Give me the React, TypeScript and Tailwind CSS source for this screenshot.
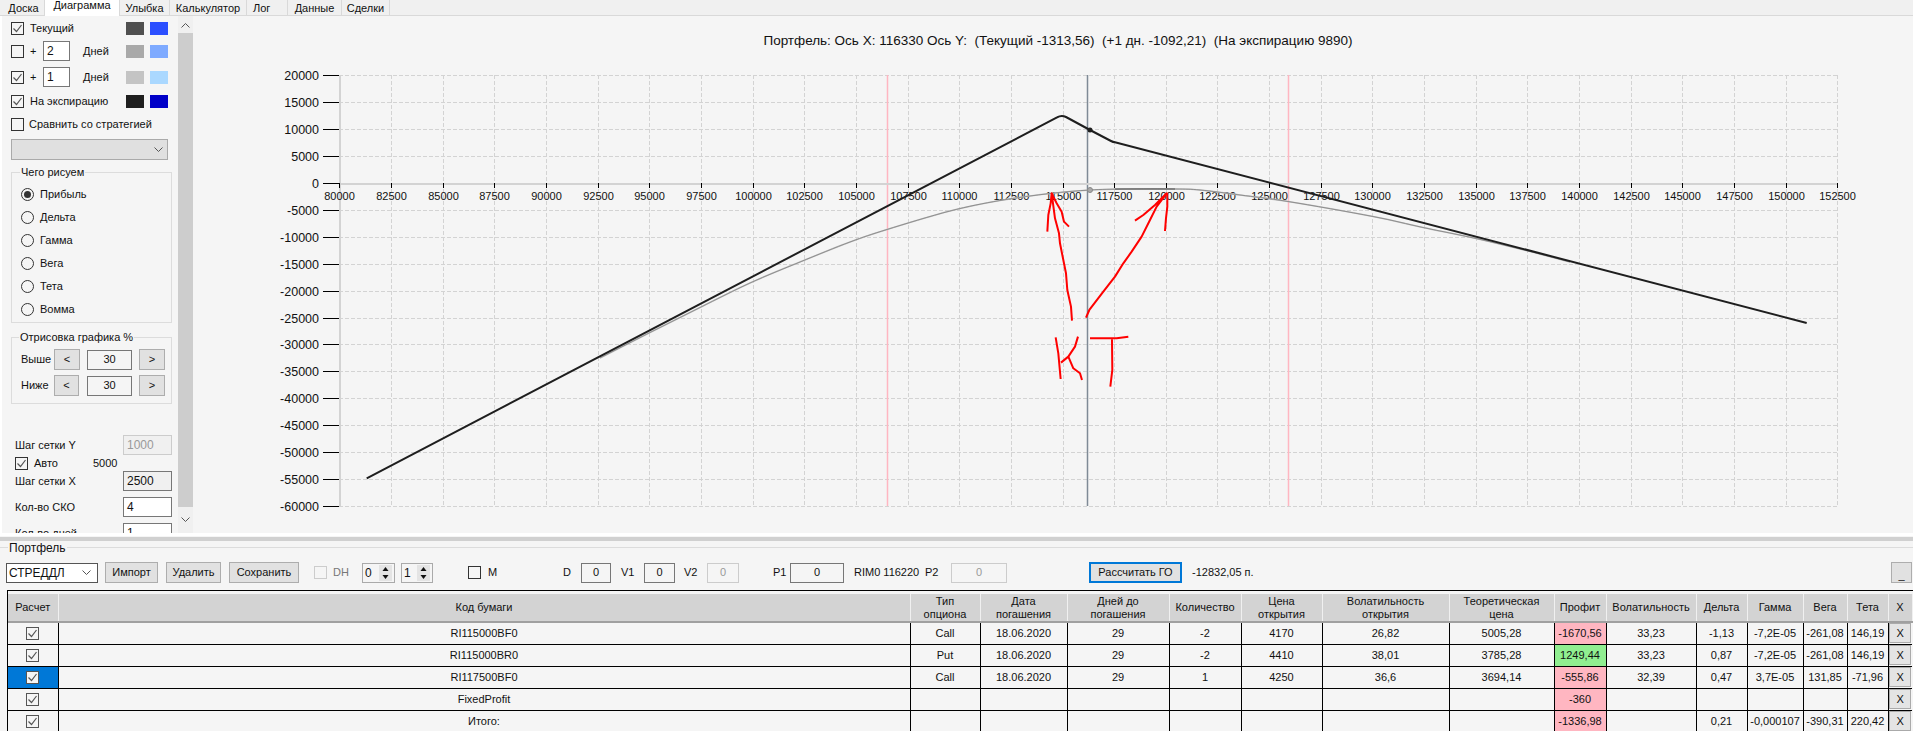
import type { ReactNode } from "react";

// Option portfolio window: chart tab on top, portfolio grid below.

const tabs = [
  { label: "Доска", cls: "w-[45px] justify-center pl-[3px]" },
  { label: "Диаграмма", cls: "w-[75px] justify-center bg-white pb-[5px]" },
  { label: "Улыбка", cls: "w-[50px] justify-center" },
  { label: "Калькулятор", cls: "w-[77px] justify-center" },
  { label: "Лог", cls: "w-[41px] pl-[6px]" },
  { label: "Данные", cls: "w-[54px] justify-center" },
  { label: "Сделки", cls: "w-[48px] justify-center" },
];

const X0 = 339.4;
const Y0 = 183;
const xOf = (i: number) => Math.round(X0 + i * 51.65) + 0.5;
const yOf = (v: number) => Math.round(Y0 - v * 0.00538) + 0.5;

const xTicks = Array.from({ length: 30 }, (_, i) => i);
const yTicks = Array.from({ length: 17 }, (_, i) => 20000 - i * 5000);

const expiryLine =
  "M366.7 478.3L1057 117.4Q1061.5 114.6 1066 117L1090 130L1111 141Q1113 142 1115 142.3L1806.7 323";

const currentPoints: [number, number][] = [
  [600, 358], [650, 332.5], [700, 307.5], [750, 283], [800, 262], [850, 242], [887, 229.5], [950, 211],
  [1000, 200.5], [1050, 193.5], [1090, 190], [1125, 189], [1175, 189], [1200, 190], [1240, 195], [1288, 201.5],
  [1373, 216.5], [1423, 227.5], [1476, 238.5], [1528, 251], [1570, 262],
];

// catmull-rom through the sampled points so the curve has no corners
function smoothPath(pts: [number, number][]) {
  let d = `M${pts[0][0]} ${pts[0][1]}`;
  for (let i = 0; i < pts.length - 1; i++) {
    const p0 = pts[Math.max(i - 1, 0)];
    const p1 = pts[i];
    const p2 = pts[i + 1];
    const p3 = pts[Math.min(i + 2, pts.length - 1)];
    const c1x = p1[0] + (p2[0] - p0[0]) / 6;
    const c1y = p1[1] + (p2[1] - p0[1]) / 6;
    const c2x = p2[0] - (p3[0] - p1[0]) / 6;
    const c2y = p2[1] - (p3[1] - p1[1]) / 6;
    d += `C${c1x} ${c1y} ${c2x} ${c2y} ${p2[0]} ${p2[1]}`;
  }
  return d;
}

const columns = [
  "w-[50px]", "w-[852px]", "w-[70px]", "w-[87px]", "w-[102px]", "w-[72px]", "w-[81px]", "w-[127px]",
  "w-[105px]", "w-[52px]", "w-[90px]", "w-[51px]", "w-[56px]", "w-[44px]", "w-[41px]", "w-[24px]",
];

const headers: ReactNode[] = [
  "Расчет", "Код бумаги", <>Тип<br />опциона</>, <>Дата<br />погашения</>, <>Дней до<br />погашения</>,
  "Количество", <>Цена<br />открытия</>, <>Волатильность<br />открытия</>, <>Теоретическая<br />цена</>,
  "Профит", "Волатильность", "Дельта", "Гамма", "Вега", "Тета", "X",
];

type Row = { cells: string[]; profit: "red" | "green"; selected?: boolean };

const rows: Row[] = [
  { cells: ["RI115000BF0", "Call", "18.06.2020", "29", "-2", "4170", "26,82", "5005,28", "-1670,56", "33,23", "-1,13", "-7,2E-05", "-261,08", "146,19"], profit: "red" },
  { cells: ["RI115000BR0", "Put", "18.06.2020", "29", "-2", "4410", "38,01", "3785,28", "1249,44", "33,23", "0,87", "-7,2E-05", "-261,08", "146,19"], profit: "green" },
  { cells: ["RI117500BF0", "Call", "18.06.2020", "29", "1", "4250", "36,6", "3694,14", "-555,86", "32,39", "0,47", "3,7E-05", "131,85", "-71,96"], profit: "red", selected: true },
  { cells: ["FixedProfit", "", "", "", "", "", "", "", "-360", "", "", "", "", ""], profit: "red" },
  { cells: ["Итого:", "", "", "", "", "", "", "", "-1336,98", "", "0,21", "-0,000107", "-390,31", "220,42"], profit: "red" },
];

function Check({ checked, className = "" }: { checked?: boolean; className?: string }) {
  return (
    <span className={`flex h-[13px] w-[13px] shrink-0 items-center justify-center border border-[#333] bg-[#f5f5f5] ${className}`}>
      {checked && (
        <svg width="11" height="11" viewBox="0 0 11 11" fill="none" stroke="#555" strokeWidth="1.2">
          <path d="M1.5 5.5L4.5 8.5L9.5 2" />
        </svg>
      )}
    </span>
  );
}

function Radio({ label, on }: { label: string; on?: boolean }) {
  return (
    <div className="flex h-[23px] items-center pl-[9px]">
      <span className="flex h-[13px] w-[13px] items-center justify-center rounded-full border border-[#333]">
        {on && <span className="h-[7px] w-[7px] rounded-full bg-[#333]" />}
      </span>
      <span className="ml-[6px]">{label}</span>
    </div>
  );
}

function Chevron({ className = "" }: { className?: string }) {
  return (
    <svg width="9" height="6" viewBox="0 0 9 6" fill="none" stroke="#555" className={className}>
      <path d="M0.5 0.5L4.5 4.5L8.5 0.5" />
    </svg>
  );
}

function Swatches({ a, b }: { a: string; b: string }) {
  return (
    <div className="ml-auto flex gap-[6px]">
      <span className={`h-[13px] w-[18px] ${a}`} />
      <span className={`h-[13px] w-[18px] ${b}`} />
    </div>
  );
}

function DayRow({ value, checked, a, b, mt }: { value: string; checked?: boolean; a: string; b: string; mt: string }) {
  return (
    <div className={`flex h-[20px] w-[157px] items-center ${mt}`}>
      <Check checked={checked} />
      <span className="ml-[6px] w-[13px]">+</span>
      <span className="flex h-[20px] w-[27px] items-center border border-[#777] bg-white pl-[3px] text-[12px]">{value}</span>
      <span className="ml-[13px]">Дней</span>
      <Swatches a={a} b={b} />
    </div>
  );
}

function Group({ title, titleX, className, children }: { title: string; titleX: string; className: string; children: ReactNode }) {
  return (
    <div className={`relative w-[161px] border border-[#dcdcdc] ${className}`}>
      <span className={`absolute top-[-6px] bg-[#f5f5f5] px-[1px] ${titleX}`}>{title}</span>
      {children}
    </div>
  );
}

function SmallButton({ children, className = "" }: { children: ReactNode; className?: string }) {
  return (
    <span className={`flex items-center justify-center border border-[#adadad] bg-[#e1e1e1] ${className}`}>{children}</span>
  );
}

function PercentRow({ label, mt, leftW }: { label: string; mt?: string; leftW: string }) {
  return (
    <div className={`flex h-[21px] items-center pl-[9px] ${mt ?? ""}`}>
      <span className="w-[33px]">{label}</span>
      <SmallButton className={`h-[21px] ${leftW}`}>&lt;</SmallButton>
      <span className={`flex h-[20px] w-[45px] items-center justify-center border border-[#777] bg-[#f5f5f5] ${leftW === "w-[26px]" ? "ml-[7px]" : "ml-[8px]"}`}>30</span>
      <SmallButton className="ml-[7px] h-[21px] w-[26px]">&gt;</SmallButton>
    </div>
  );
}

function FieldRow({ label, value, className, mt }: { label: string; value: string; className: string; mt: string }) {
  return (
    <div className={`flex h-[20px] w-[161px] shrink-0 items-center pl-[4px] ${mt}`}>
      <span>{label}</span>
      <span className={`ml-auto flex h-[20px] w-[49px] items-center border pl-[3px] text-[12px] ${className}`}>{value}</span>
    </div>
  );
}

function Sidebar() {
  return (
    <div className="h-full w-[178px] shrink-0 overflow-hidden border-l-2 border-white pl-[9px]">
      <div className="mt-[2px] flex h-[20px] w-[157px] items-center">
        <Check checked />
        <span className="ml-[6px]">Текущий</span>
        <Swatches a="bg-[#505050]" b="bg-[#2b4fff]" />
      </div>
      <DayRow value="2" a="bg-[#a9a9a9]" b="bg-[#7eaaff]" mt="mt-[3px]" />
      <DayRow value="1" checked a="bg-[#c4c4c4]" b="bg-[#aad8ff]" mt="mt-[6px]" />
      <div className="mt-[4px] flex h-[20px] w-[157px] items-center">
        <Check checked />
        <span className="ml-[6px]">На экспирацию</span>
        <Swatches a="bg-[#1e1e1e]" b="bg-[#0000c8]" />
      </div>
      <div className="mt-[3px] flex h-[20px] items-center">
        <Check />
        <span className="ml-[5px]">Сравнить со стратегией</span>
      </div>
      <div className="mt-[5px] flex h-[21px] w-[157px] items-center justify-end border border-[#aaa] bg-[#e0e0e0] pr-[4px]">
        <Chevron />
      </div>
      <Group title="Чего рисуем" titleX="left-[8px]" className="mt-[12px] pt-[10px] pb-[1px]">
        <Radio label="Прибыль" on />
        <Radio label="Дельта" />
        <Radio label="Гамма" />
        <Radio label="Вега" />
        <Radio label="Тета" />
        <Radio label="Вомма" />
      </Group>
      <Group title="Отрисовка графика %" titleX="left-[7px]" className="mt-[14px] pt-[11px] pb-[7px]">
        <PercentRow label="Выше" leftW="w-[26px]" />
        <PercentRow label="Ниже" leftW="w-[25px]" mt="mt-[5px]" />
      </Group>
      <FieldRow label="Шаг сетки Y" value="1000" className="border-[#ccc] bg-[#f0f0f0] text-[#999]" mt="mt-[31px]" />
      <div className="mt-[2px] flex h-[12px] items-center pl-[4px]">
        <Check checked />
        <span className="ml-[6px] w-[59px]">Авто</span>
        <span>5000</span>
      </div>
      <FieldRow label="Шаг сетки X" value="2500" className="border-[#777] bg-[#f0f0f0]" mt="mt-[2px]" />
      <FieldRow label="Кол-во СКО" value="4" className="border-[#777] bg-white" mt="mt-[6px]" />
      <FieldRow label="Кол-во дней" value="1" className="border-[#777] bg-white" mt="mt-[6px]" />
    </div>
  );
}

function Scrollbar() {
  return (
    <div className="flex h-full w-[15px] shrink-0 flex-col bg-[#f0f0f0]">
      <div className="flex h-[17px] items-center justify-center">
        <Chevron className="rotate-180" />
      </div>
      <div className="h-[474px] bg-[#cdcdcd]" />
      <div className="flex flex-1 items-center justify-center">
        <Chevron />
      </div>
    </div>
  );
}

function Chart() {
  const current = smoothPath(currentPoints);
  return (
    <svg viewBox="193 16 1720 517" className="h-[517px] w-[1720px] shrink-0">
      <text x="1058" y="45" textAnchor="middle" fontSize="13.5" fill="#111" className="whitespace-pre">
        {"Портфель: Ось X: 116330 Ось Y:  (Текущий -1313,56)  (+1 дн. -1092,21)  (На экспирацию 9890)"}
      </text>

      {/* grid */}
      {yTicks.map((v) => (
        <line key={v} x1="339" x2="1837" y1={yOf(v)} y2={yOf(v)} stroke="#d3d3d3" strokeDasharray="4 2" />
      ))}
      {xTicks.map((i) => (
        <line key={i} x1={xOf(i)} x2={xOf(i)} y1="75" y2="506" stroke="#d3d3d3" strokeDasharray="4 2" />
      ))}

      {/* strike lines */}
      <line x1="887.5" x2="887.5" y1="75" y2="506" stroke="#ffb6c1" strokeWidth="1.5" />
      <line x1="1288.5" x2="1288.5" y1="75" y2="506" stroke="#ffb6c1" strokeWidth="1.5" />
      <line x1="1087.5" x2="1087.5" y1="75" y2="506" stroke="#7f8a96" strokeWidth="1.5" />

      {/* axes */}
      <line x1="340" x2="340" y1="75" y2="506" stroke="#d3d3d3" strokeWidth="2" />
      <line x1="339" x2="1837" y1="184" y2="184" stroke="#d3d3d3" strokeWidth="2" />
      {yTicks.map((v) => (
        <g key={v}>
          <line x1="323" x2="339" y1={yOf(v)} y2={yOf(v)} stroke="#000" />
          <text x="319" y={yOf(v) + 4.5} textAnchor="end" fontSize="12.5" fill="#111">{v}</text>
        </g>
      ))}
      {xTicks.map((i) => (
        <g key={i}>
          <line x1={xOf(i)} x2={xOf(i)} y1="183" y2="188" stroke="#000" />
          <text x={xOf(i)} y="199.5" textAnchor="middle" fontSize="11" fill="#111">{80000 + i * 2500}</text>
        </g>
      ))}

      {/* curves */}
      <path d={current} fill="none" stroke="#c4c4c4" strokeWidth="1.6" />
      <path d={current} fill="none" stroke="#808080" strokeWidth="0.8" />
      <path d="M1115 189H1175" fill="none" stroke="#555" strokeWidth="1" />
      <path d={expiryLine} fill="none" stroke="#1e1e1e" strokeWidth="2" />
      <circle cx="1090" cy="130" r="2.5" fill="#1e1e1e" />
      <circle cx="1090" cy="190" r="2.5" fill="#a9a9a9" stroke="#888" />

      {/* hand-drawn marks */}
      <g transform="translate(960 90) scale(0.3333)" fill="none" stroke="#ff0000" strokeWidth="6" strokeLinejoin="round">
        <polyline points="336,692 333,650 322,600 318,550 310,510 300,460 297,430 285,385 275,310 272,340 265,375 262,425" />
        <polyline points="275,310 290,340 305,365 312,395 327,410" />
        <polyline points="378,683 388,660 430,605 465,560 490,520 515,485 545,440 570,390 590,350 620,310 585,345 550,375 525,392" />
        <polyline points="622,310 622,350 618,385 615,423" />
        <polyline points="287,742 295,790 302,867" />
        <polyline points="354,740 345,770 325,800 303,818" />
        <polyline points="325,800 340,835 360,850 366,870" />
        <polyline points="390,745 470,745 505,740" />
        <polyline points="456,748 457,840 451,890" />
      </g>
    </svg>
  );
}

function Spin({ value, className }: { value: string; className: string }) {
  return (
    <span className={`flex h-[20px] shrink-0 items-center border border-[#aaa] text-[12px] ${className}`}>
      <span className="flex-1 pl-[2px]">{value}</span>
      <span className="mr-[2px] flex h-[16px] w-[13px] flex-col bg-[#e4e4e4]">
        <svg width="13" height="8" viewBox="0 0 13 8" fill="#111"><path d="M6.5 2L9.5 6H3.5Z" /></svg>
        <svg width="13" height="8" viewBox="0 0 13 8" fill="#111"><path d="M6.5 6L9.5 2H3.5Z" /></svg>
      </span>
    </span>
  );
}

function Box({ value, className }: { value: string; className: string }) {
  return (
    <span className={`flex h-[20px] shrink-0 items-center justify-center border ${className}`}>{value}</span>
  );
}

function Button({ label, className }: { label: string; className: string }) {
  return (
    <span className={`flex h-[21px] shrink-0 items-center justify-center border border-[#adadad] bg-[#e1e1e1] ${className}`}>{label}</span>
  );
}

function Toolbar() {
  return (
    <div className="flex h-[21px] items-center pl-[6px]">
      <span className="flex h-[20px] w-[92px] shrink-0 items-center justify-between border border-[#555] bg-white pl-[2px] pr-[6px] text-[12px]">
        СТРЕДДЛ
        <Chevron />
      </span>
      <Button label="Импорт" className="ml-[7px] w-[53px]" />
      <Button label="Удалить" className="ml-[8px] w-[55px]" />
      <Button label="Сохранить" className="ml-[8px] w-[70px]" />
      <span className="ml-[15px] h-[13px] w-[13px] shrink-0 border border-[#ccc]" />
      <span className="ml-[6px] w-[16px] shrink-0 text-[#777]">DH</span>
      <Spin value="0" className="ml-[13px] w-[33px]" />
      <Spin value="1" className="ml-[6px] w-[32px]" />
      <Check className="ml-[35px]" />
      <span className="ml-[7px] w-[75px] shrink-0">M</span>
      <span className="w-[18px] shrink-0">D</span>
      <Box value="0" className="w-[30px] border-[#777]" />
      <span className="ml-[10px] w-[23px] shrink-0">V1</span>
      <Box value="0" className="w-[31px] border-[#777]" />
      <span className="ml-[9px] w-[23px] shrink-0">V2</span>
      <Box value="0" className="w-[32px] border-[#ccc] text-[#999]" />
      <span className="ml-[34px] w-[17px] shrink-0">P1</span>
      <Box value="0" className="w-[54px] border-[#777]" />
      <span className="ml-[10px] w-[71px] shrink-0 whitespace-nowrap">RIM0 116220</span>
      <span className="w-[26px] shrink-0">P2</span>
      <Box value="0" className="w-[56px] border-[#ccc] text-[#999]" />
      <span className="ml-[82px] flex h-[21px] w-[93px] shrink-0 items-center justify-center border-2 border-[#0078d7] bg-[#e1e1e1]">Рассчитать ГО</span>
      <span className="ml-[10px] w-[80px] shrink-0 whitespace-nowrap">-12832,05 п.</span>
      <span className="ml-[619px] flex h-[21px] w-[21px] shrink-0 items-end justify-center border border-[#adadad] bg-[#e1e1e1] pb-[1px]">_</span>
    </div>
  );
}

function Grid() {
  return (
    <div className="ml-[7px] mt-[7px] border-l border-t border-black pt-[3px]">
      <table className="w-[1904px] table-fixed border-collapse text-center">
        <colgroup>
          {columns.map((c, i) => <col key={i} className={c} />)}
        </colgroup>
        <thead>
          <tr className="h-[28px] bg-[#d3d3d3]">
            {headers.map((h, i) => (
              <th key={i} className="border-b-2 border-r border-b-[#a0a0a0] border-r-[#f0f0f0] p-0 font-normal leading-[13px]">{h}</th>
            ))}
          </tr>
        </thead>
        <tbody>
          {rows.map((row, r) => (
            <tr key={r} className="h-[22px]">
              <td className={`border-b border-r border-black p-0 ${row.selected ? "bg-[#0078d7]" : ""}`}>
                <Check checked className="mx-auto border-[#555]" />
              </td>
              {row.cells.map((cell, c) => (
                <td
                  key={c}
                  className={`border-b border-r border-black p-0 ${
                    c === 8 ? (row.profit === "green" ? "bg-[#90ee90]" : "bg-[#ffb6c1]") : ""
                  }`}
                >
                  {cell}
                </td>
              ))}
              <td className="border-b border-black p-0">
                <span className="mx-auto flex h-[20px] w-[22px] items-center justify-center border border-[#aaa] bg-[#e4e4e4]">X</span>
              </td>
            </tr>
          ))}
        </tbody>
      </table>
    </div>
  );
}

export default function App() {
  return (
    <div className="h-[731px] w-[1913px] overflow-hidden bg-[#f5f5f5] text-[11px] leading-none text-[#111] [font-family:'Liberation_Sans',sans-serif]">
      {/* tabs */}
      <div className="flex h-[16px] border-b border-[#d9d9d9] bg-[#f0f0f0]">
        {tabs.map((t) => (
          <span key={t.label} className={`flex h-[16px] items-center border-r border-[#d9d9d9] ${t.cls}`}>
            {t.label}
          </span>
        ))}
      </div>

      <div className="flex h-[517px]">
        <Sidebar />
        <Scrollbar />
        <Chart />
      </div>

      {/* splitter */}
      <div className="h-[3px] bg-white" />
      <div className="mt-[1px] h-[4px] bg-[#d0d0d0]" />

      {/* portfolio */}
      <div className="relative mt-[6px] border-t border-[#dcdcdc] pt-[14px]">
        <span className="absolute left-[8px] top-[-6px] bg-[#f5f5f5] px-[1px] text-[12px]">Портфель</span>
        <Toolbar />
        <Grid />
      </div>
    </div>
  );
}
